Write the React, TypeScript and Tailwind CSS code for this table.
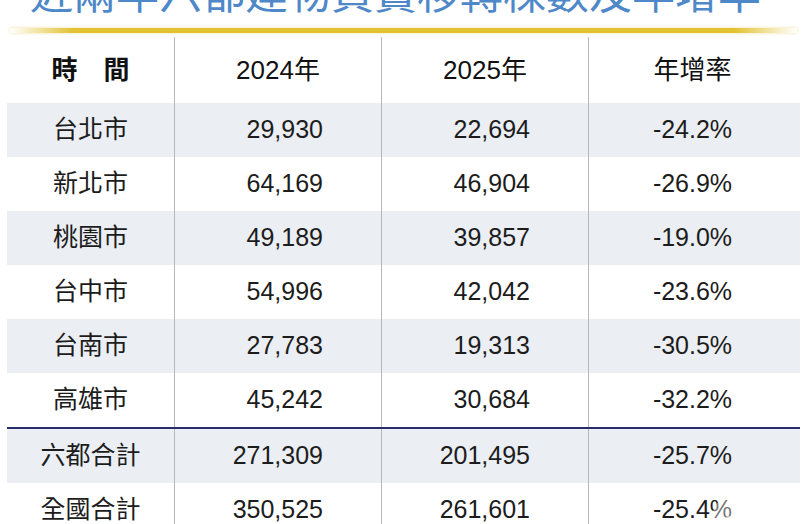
import React from "react";

type Row = { name: string; y2024: string; y2025: string; rate: string };

const cities: Row[] = [
  { name: "台北市", y2024: "29,930", y2025: "22,694", rate: "-24.2%" },
  { name: "新北市", y2024: "64,169", y2025: "46,904", rate: "-26.9%" },
  { name: "桃園市", y2024: "49,189", y2025: "39,857", rate: "-19.0%" },
  { name: "台中市", y2024: "54,996", y2025: "42,042", rate: "-23.6%" },
  { name: "台南市", y2024: "27,783", y2025: "19,313", rate: "-30.5%" },
  { name: "高雄市", y2024: "45,242", y2025: "30,684", rate: "-32.2%" },
];

const totals: Row[] = [
  { name: "六都合計", y2024: "271,309", y2025: "201,495", rate: "-25.7%" },
  { name: "全國合計", y2024: "350,525", y2025: "261,601", rate: "-25.4%" },
];

const font = "font-['Liberation_Sans','Noto_Sans_CJK_TC',sans-serif]";

function DataRow({ row, shaded }: { row: Row; shaded: boolean }) {
  return (
    <div
      className={`grid grid-cols-[167px_207px_207px_208px] h-[54px] text-[25px] text-[#1c1c1c] ${
        shaded ? "bg-[#ebeef3]" : "bg-white"
      }`}
    >
      <div className="flex items-center justify-center">{row.name}</div>
      <div className="flex items-center justify-end pr-[58px] border-l border-[#b8b8b8]">{row.y2024}</div>
      <div className="flex items-center justify-end pr-[58px] border-l border-[#b8b8b8]">{row.y2025}</div>
      <div className="flex items-center justify-center border-l border-[#b8b8b8]">{row.rate}</div>
    </div>
  );
}

export default function App() {
  return (
    <div className={`relative w-[807px] h-[524px] overflow-hidden bg-white ${font}`}>
      {/* Title, cut off at the top */}
      <div className="h-[28px] overflow-hidden">
        <div className="mt-[-31px] pl-[30px] text-[43px] leading-none whitespace-nowrap text-[#4f88c8] font-['Noto_Sans_CJK_TC',sans-serif]">
          近兩年六都建物買賣移轉棟數及年增率
        </div>
      </div>

      {/* Gold rule */}
      <div className="mx-[10px] h-[5px] bg-[linear-gradient(to_right,rgba(226,194,50,0)_0%,#e2c232_8%,#e2c232_92%,rgba(226,194,50,0)_100%)] shadow-[0_0_3px_rgba(226,194,50,0.5)]" />

      <div className="px-[7px]">
        {/* Header */}
        <div className="grid grid-cols-[167px_207px_207px_208px] h-[70px] pt-[4px] text-[26px] text-[#111]">
          <div className="flex items-center justify-center font-bold">時　間</div>
          <div className="flex items-center justify-center border-l border-[#b8b8b8]">2024年</div>
          <div className="flex items-center justify-center border-l border-[#b8b8b8]">2025年</div>
          <div className="flex items-center justify-center border-l border-[#b8b8b8]">年增率</div>
        </div>

        {cities.map((r, i) => (
          <DataRow key={r.name} row={r} shaded={i % 2 === 0} />
        ))}

        <div className="h-[2px] bg-[#2a2d6b]" />

        {totals.map((r, i) => (
          <DataRow key={r.name} row={r} shaded={i % 2 === 0} />
        ))}
      </div>

      {/* faint watermark */}
      <div className="absolute left-[712px] top-[494px] w-[48px] h-[48px] rounded-full bg-white/40 flex items-center justify-center">
        <svg width="22" height="22" viewBox="0 0 22 22" className="opacity-60">
          <path d="M11 3v16M3 11h16" stroke="#ffffff" strokeWidth="4" strokeLinecap="round" />
        </svg>
      </div>
    </div>
  );
}
